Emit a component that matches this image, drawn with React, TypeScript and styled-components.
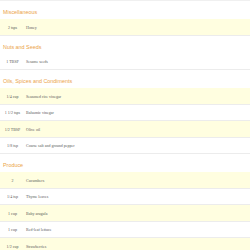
import React from "react";
import styled, {createGlobalStyle} from "styled-components";

const GlobalStyle = createGlobalStyle`
	html, body {
		margin: 0;
		padding: 0;
		background: #ffffff;
	}
`;

interface Item {
	qty: string;
	name: string;
}

interface Section {
	title: string;
	items: Item[];
}

const sections: Section[] = [
	{title: "Miscellaneous", items: [{qty: "2 tsps", name: "Honey"}]},
	{title: "Nuts and Seeds", items: [{qty: "1 TBSP", name: "Sesame seeds"}]},
	{
		title: "Oils, Spices and Condiments",
		items: [
			{qty: "1/4 cup", name: "Seasoned rice vinegar"},
			{qty: "1 1/2 tsps", name: "Balsamic vinegar"},
			{qty: "1/2 TBSP", name: "Olive oil"},
			{qty: "1/8 tsp", name: "Coarse salt and ground pepper"},
		],
	},
	{
		title: "Produce",
		items: [
			{qty: "2", name: "Cucumbers"},
			{qty: "1/4 tsp", name: "Thyme leaves"},
			{qty: "1 cup", name: "Baby arugula"},
			{qty: "1 cup", name: "Red-leaf lettuce"},
			{qty: "1/2 cup", name: "Strawberries"},
		],
	},
];

// running offset of each section's first row, so stripes continue across sections
const offsets = sections.reduce<number[]>((acc, s, i) => {
	acc.push(i === 0 ? 0 : acc[i - 1] + sections[i - 1].items.length);
	return acc;
}, []);

const Page = styled.div`
	width: 250px;
	height: 250px;
	overflow: hidden;
	border-top: 1px solid #f0f0f0;
	box-sizing: border-box;
`;

const Heading = styled.h3`
	margin: 0;
	height: 18px;
	box-sizing: border-box;
	display: flex;
	align-items: flex-end;
	padding: 0 0 3px 3px;
	font-family: "Liberation Sans", Arial, sans-serif;
	font-weight: normal;
	font-size: 5.4px;
	line-height: 8px;
	color: #eba348;
`;

const Row = styled.div<{$shade: boolean}>`
	display: flex;
	align-items: center;
	height: 16.5px;
	box-sizing: border-box;
	border-bottom: 1px solid #ececec;
	background: ${(p) => (p.$shade ? "#fffee0" : "#ffffff")};
	font-family: "Liberation Serif", "Times New Roman", serif;
	font-size: 4px;
	color: #5a5a5a;
	padding-top: 1px;
`;

const Qty = styled.span`
	width: 25px;
	flex-shrink: 0;
	text-align: center;
`;

const Name = styled.span`
	padding-left: 1px;
`;

export default function App() {
	return (
		<>
			<GlobalStyle />
			<Page>
				{sections.map((section, si) => (
					<div key={section.title}>
						<Heading>{section.title}</Heading>
						{section.items.map((item, ii) => (
							<Row key={item.name} $shade={(offsets[si] + ii) % 2 === 0}>
								<Qty>{item.qty}</Qty>
								<Name>{item.name}</Name>
							</Row>
						))}
					</div>
				))}
			</Page>
		</>
	);
}
